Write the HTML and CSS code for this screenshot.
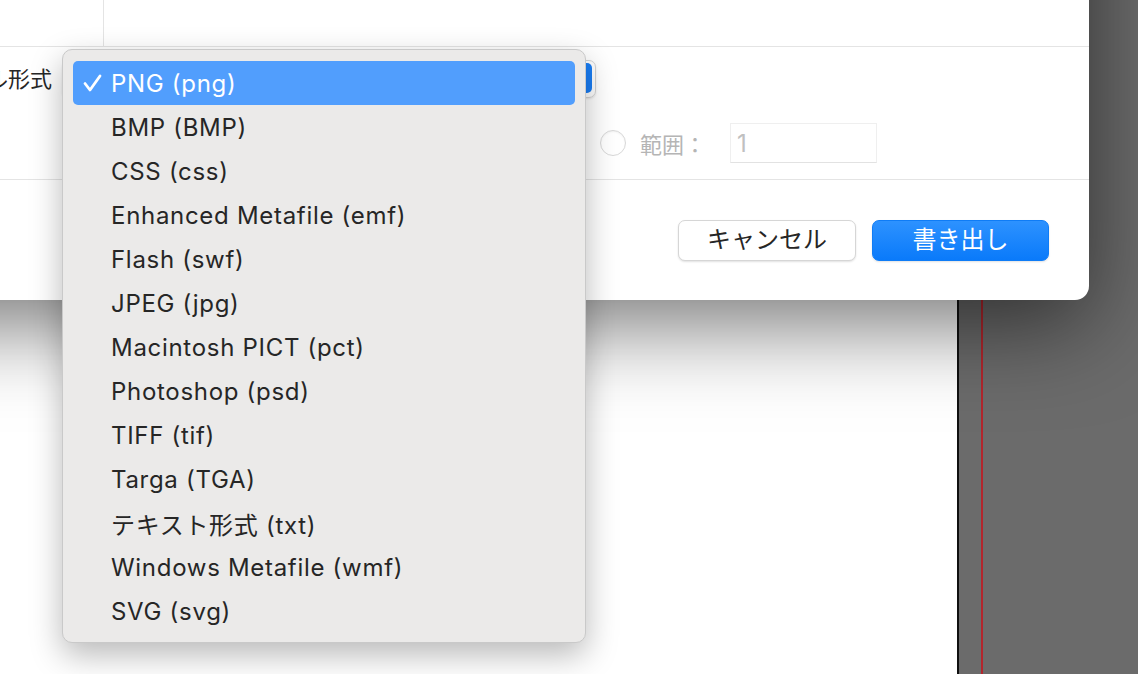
FILE: index.html
```html
<!DOCTYPE html>
<html lang="ja">
<head>
    <meta charset="UTF-8">
    <title>書き出し</title>
    <link rel="stylesheet" href="styles.css">
</head>
<body>
    <!-- App window behind the sheet -->
    <div class="app">
        <div class="canvas"></div>
        <div class="pasteboard"><div class="guide"></div></div>
    </div>

    <!-- Export sheet -->
    <div class="dialog">
        <div class="dialog-top">
            <div class="top-left"></div>
            <div class="top-right"></div>
        </div>
        <div class="dialog-options">
            <div class="format-row">
                <div class="label"><span>ファイル形式</span></div>
                <div class="popup"><span class="popup-arrows"></span></div>
            </div>
            <div class="range-row">
                <span class="radio"></span>
                <span class="range-label">範囲：</span>
                <span class="field">1</span>
            </div>
        </div>
        <div class="dialog-actions">
            <button class="btn">キャンセル</button>
            <button class="btn primary">書き出し</button>
        </div>
    </div>

    <!-- Open popup menu -->
    <ul class="menu">
        <li class="menu-item selected">
            <span class="check"><svg width="19" height="18" viewBox="0 0 19 18"><polyline points="2,9.5 7,16 17,2" fill="none" stroke="#fff" stroke-width="2.8" stroke-linecap="round" stroke-linejoin="round"/></svg></span>
            PNG (png)
        </li>
        <li class="menu-item"><span class="check"></span>BMP (BMP)</li>
        <li class="menu-item"><span class="check"></span>CSS (css)</li>
        <li class="menu-item"><span class="check"></span>Enhanced Metafile (emf)</li>
        <li class="menu-item"><span class="check"></span>Flash (swf)</li>
        <li class="menu-item"><span class="check"></span>JPEG (jpg)</li>
        <li class="menu-item"><span class="check"></span>Macintosh PICT (pct)</li>
        <li class="menu-item"><span class="check"></span>Photoshop (psd)</li>
        <li class="menu-item"><span class="check"></span>TIFF (tif)</li>
        <li class="menu-item"><span class="check"></span>Targa (TGA)</li>
        <li class="menu-item"><span class="check"></span>テキスト形式 (txt)</li>
        <li class="menu-item"><span class="check"></span>Windows Metafile (wmf)</li>
        <li class="menu-item"><span class="check"></span>SVG (svg)</li>
    </ul>
</body>
</html>
```

FILE: styles.css
```css
* {
    margin: 0;
    padding: 0;
    box-sizing: border-box;
}

body {
    width: 1138px;
    height: 674px;
    overflow: hidden;
    position: relative;
    font-family: 'Inter', 'Noto Sans CJK JP', sans-serif;
    color: #262626;
}

/* Background app window */
.app {
    display: flex;
    height: 100%;
}

.canvas {
    width: 959px;
    background: #fff;
    border-right: 2px solid #111;
    flex-shrink: 0;
}

.pasteboard {
    flex: 1;
    background: #6b6b6b;
    padding-left: 22px;
}

.guide {
    width: 2px;
    height: 100%;
    background: #b3262d;
}

/* Sheet */
.dialog {
    position: absolute;
    left: -200px;
    top: -200px;
    width: 1289px;
    padding: 200px 0 0 200px;
    background: #fff;
    border-radius: 0 0 14px 0;
    box-shadow: 0 24px 90px rgba(0, 0, 0, 0.55);
}

.dialog-top {
    display: flex;
    height: 47px;
    border-bottom: 1px solid #e4e4e4;
}

.top-left {
    width: 104px;
    border-right: 1px solid #e4e4e4;
}

.dialog-options {
    height: 133px;
    padding-top: 13px;
    border-bottom: 1px solid #e4e4e4;
}

.format-row {
    display: flex;
    align-items: center;
}

.label {
    width: 52px;
    display: flex;
    justify-content: flex-end;
    white-space: nowrap;
    font-size: 22px;
    margin-right: 10px;
    padding-bottom: 5px;
}

.popup {
    width: 534px;
    height: 38px;
    border: 1px solid #d4d4d4;
    border-radius: 7px;
    display: flex;
    justify-content: flex-end;
    padding: 2px 3px 4px;
    box-shadow: 0 1px 2px rgba(0, 0, 0, 0.1);
}

.popup-arrows {
    width: 22px;
    background: #1a7ef5;
    border-radius: 5px;
}

.range-row {
    display: flex;
    align-items: center;
    margin: 25px 0 0 600px;
    height: 40px;
}

.radio {
    width: 26px;
    height: 26px;
    border-radius: 50%;
    border: 1px solid #d8d8d8;
    box-shadow: inset 0 1px 2px rgba(0, 0, 0, 0.05);
    margin-right: 14px;
}

.range-label {
    font-size: 22px;
    color: #b5b5b5;
    width: 90px;
}

.field {
    width: 147px;
    height: 40px;
    border: 1px solid #efefef;
    border-bottom-color: #e2e2e2;
    padding-left: 6px;
    font-size: 24px;
    line-height: 40px;
    color: #c0c0c0;
}

.dialog-actions {
    display: flex;
    justify-content: flex-end;
    gap: 16px;
    padding: 40px 40px 39px 0;
}

.btn {
    width: 178px;
    height: 41px;
    font-family: 'Noto Sans CJK JP', sans-serif;
    font-size: 24px;
    line-height: 1;
    padding-bottom: 6px;
    color: #262626;
    background: #fff;
    border: 1px solid #d6d6d6;
    border-radius: 7px;
    box-shadow: 0 1px 2px rgba(0, 0, 0, 0.12);
}

.btn.primary {
    width: 177px;
    color: #fff;
    border-color: #0f7cf6;
    background: linear-gradient(#2d92ff, #0a7afa);
}

/* Popup menu */
.menu {
    position: absolute;
    left: 62px;
    top: 49px;
    width: 524px;
    list-style: none;
    padding: 11px 10px 9px;
    background: #ebeae9;
    border: 1px solid #c9c9c9;
    border-radius: 10px;
    box-shadow: 0 12px 32px rgba(0, 0, 0, 0.28);
}

.menu-item {
    height: 44px;
    display: flex;
    align-items: center;
    font-size: 24px;
    letter-spacing: 0.7px;
    color: #262626;
    border-radius: 5px;
}

.menu-item.selected {
    background: #519efd;
    color: #fff;
}

.check {
    width: 38px;
    padding-left: 10px;
    display: flex;
    align-items: center;
}
```
